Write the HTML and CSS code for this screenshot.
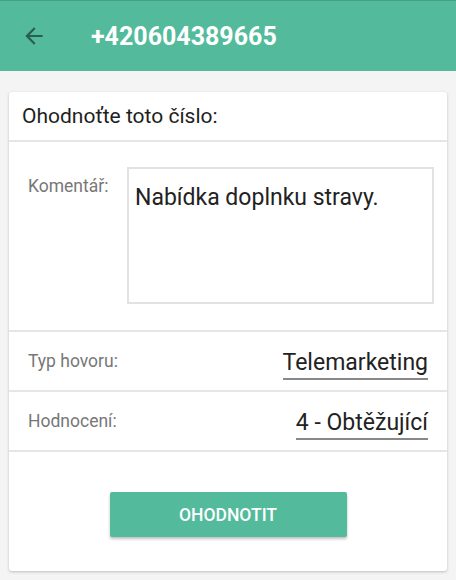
FILE: index.html
```html
<!DOCTYPE html>
<html lang="cs">

<head>
  <meta charset="UTF-8" />
  <meta name="viewport" content="width=device-width, initial-scale=1.0" />
  <title>Ohodnotit číslo</title>
  <link rel="stylesheet" href="styles.css">
</head>

<body>
  <header class="toolbar">
    <button class="back" aria-label="Zpět">
      <svg width="24" height="24" viewBox="0 0 24 24">
        <path d="M20 11H7.83l5.59-5.59L12 4l-8 8 8 8 1.41-1.41L7.83 13H20v-2z" fill="currentColor" />
      </svg>
    </button>
    <h1 class="title">+420604389665</h1>
  </header>

  <main class="content">
    <div class="card">
      <div class="card-head">Ohodnoťte toto číslo:</div>

      <div class="row row-comment">
        <label class="label" for="comment">Komentář:</label>
        <textarea id="comment" class="comment">Nabídka doplnku stravy.</textarea>
      </div>

      <div class="row">
        <span class="label">Typ hovoru:</span>
        <span class="select">Telemarketing</span>
      </div>

      <div class="row">
        <span class="label">Hodnocení:</span>
        <span class="select">4 - Obtěžující</span>
      </div>

      <div class="actions">
        <button class="submit">Ohodnotit</button>
      </div>
    </div>
  </main>
</body>

</html>
```

FILE: styles.css
```css
body {
  font-family: Roboto, "Noto Sans", Arial, sans-serif;
  margin: 0;
  padding: 0;
  background: #f4f4f4;
  color: #222;
}

.toolbar {
  height: 70px;
  background: #53bb9c;
  border-top: 1px solid #44a085;
  display: flex;
  align-items: center;
}

.back {
  margin-left: 21px;
  width: 26px;
  height: 26px;
  padding: 0;
  border: 0;
  background: none;
  color: #2b5e4f;
  display: flex;
  align-items: center;
  justify-content: center;
}

.back svg {
  width: 26px;
  height: 26px;
}

.title {
  margin: 0 0 0 44px;
  font-size: 25px;
  font-weight: 700;
  color: #fff;
}

.content {
  padding: 21px 9px 10px;
}

.card {
  background: #fff;
  border-radius: 3px;
  box-shadow: 0 1px 3px rgba(0, 0, 0, 0.22);
}

.card-head {
  height: 48px;
  padding-left: 13px;
  display: flex;
  align-items: center;
  font-size: 21px;
  color: #1e1e1e;
  border-bottom: 2px solid #e6e6e6;
}

.row {
  height: 58px;
  padding: 0 19px;
  display: flex;
  align-items: center;
  justify-content: space-between;
  border-bottom: 2px solid #e6e6e6;
}

.row-comment {
  height: auto;
  padding: 25px 13px 26px 19px;
  align-items: flex-start;
}

.label {
  font-size: 17.5px;
  color: #777;
}

.row-comment .label {
  padding-top: 9px;
}

.comment {
  width: 307px;
  height: 137px;
  box-sizing: border-box;
  border: 2px solid #e2e2e2;
  padding: 15px 6px;
  font-family: inherit;
  font-size: 23px;
  color: #222;
  resize: none;
  outline: none;
}

.select {
  font-size: 23px;
  color: #222;
  margin-top: 7px;
  padding-bottom: 2px;
  border-bottom: 2px solid #888;
}

.actions {
  padding: 40px 0 34px;
  display: flex;
  justify-content: center;
}

.submit {
  width: 237px;
  height: 45px;
  border: 0;
  border-radius: 2px;
  background: #53bb9c;
  color: #fff;
  font-family: inherit;
  font-size: 17.5px;
  font-weight: 500;
  text-transform: uppercase;
  box-shadow: 0 2px 3px rgba(0, 0, 0, 0.25);
}
```
